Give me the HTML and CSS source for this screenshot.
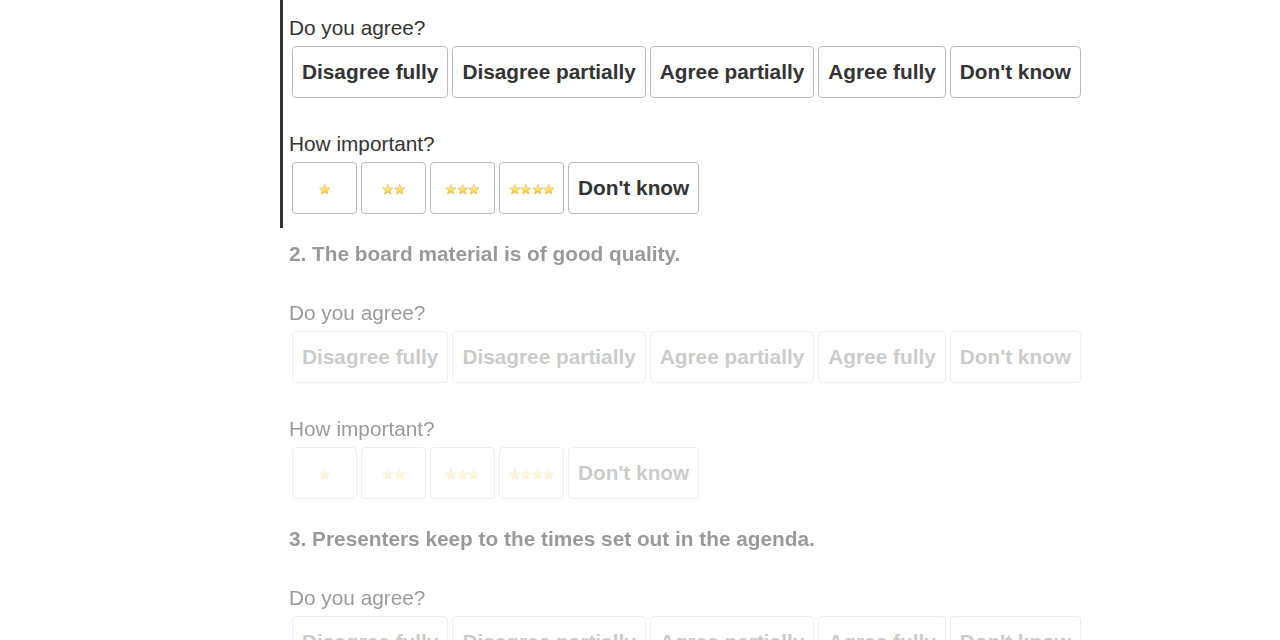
FILE: index.html
```html
<!DOCTYPE html>
<html lang="en">
<head>
  <meta charset="UTF-8" />
  <title>Board evaluation</title>
  <link rel="stylesheet" href="styles.css">
</head>
<body>
  <svg class="defs" width="0" height="0">
    <defs>
      <linearGradient id="starFill" x1="0" y1="0" x2="0" y2="1">
        <stop offset="0" stop-color="#fff8c8"/>
        <stop offset="0.55" stop-color="#ffe066"/>
        <stop offset="1" stop-color="#f2bc2a"/>
      </linearGradient>
      <symbol id="star" viewBox="0 0 12 12">
        <path d="M6 0.4 L7.41 4.06 L11.4 4.25 L8.28 6.74 L9.35 10.6 L6 8.4 L2.65 10.6 L3.72 6.74 L0.6 4.25 L4.59 4.06 Z" fill="url(#starFill)" stroke="#dcae3a" stroke-width="0.6" stroke-linejoin="round"/>
      </symbol>
    </defs>
  </svg>

  <div class="survey">
    <div class="question active">
      <div class="field">
        <div class="label">Do you agree?</div>
        <div class="options">
          <button class="opt">Disagree fully</button>
          <button class="opt">Disagree partially</button>
          <button class="opt">Agree partially</button>
          <button class="opt">Agree fully</button>
          <button class="opt">Don't know</button>
        </div>
      </div>
      <div class="field">
        <div class="label">How important?</div>
        <div class="options">
          <button class="opt stars"><svg class="star"><use href="#star"/></svg></button>
          <button class="opt stars"><svg class="star"><use href="#star"/></svg><svg class="star"><use href="#star"/></svg></button>
          <button class="opt stars"><svg class="star"><use href="#star"/></svg><svg class="star"><use href="#star"/></svg><svg class="star"><use href="#star"/></svg></button>
          <button class="opt stars"><svg class="star"><use href="#star"/></svg><svg class="star"><use href="#star"/></svg><svg class="star"><use href="#star"/></svg><svg class="star"><use href="#star"/></svg></button>
          <button class="opt">Don't know</button>
        </div>
      </div>
    </div>

    <div class="question inactive">
      <h3 class="title">2. The board material is of good quality.</h3>
      <div class="field">
        <div class="label">Do you agree?</div>
        <div class="options">
          <button class="opt">Disagree fully</button>
          <button class="opt">Disagree partially</button>
          <button class="opt">Agree partially</button>
          <button class="opt">Agree fully</button>
          <button class="opt">Don't know</button>
        </div>
      </div>
      <div class="field">
        <div class="label">How important?</div>
        <div class="options">
          <button class="opt stars"><svg class="star"><use href="#star"/></svg></button>
          <button class="opt stars"><svg class="star"><use href="#star"/></svg><svg class="star"><use href="#star"/></svg></button>
          <button class="opt stars"><svg class="star"><use href="#star"/></svg><svg class="star"><use href="#star"/></svg><svg class="star"><use href="#star"/></svg></button>
          <button class="opt stars"><svg class="star"><use href="#star"/></svg><svg class="star"><use href="#star"/></svg><svg class="star"><use href="#star"/></svg><svg class="star"><use href="#star"/></svg></button>
          <button class="opt">Don't know</button>
        </div>
      </div>
    </div>

    <div class="question inactive">
      <h3 class="title">3. Presenters keep to the times set out in the agenda.</h3>
      <div class="field">
        <div class="label">Do you agree?</div>
        <div class="options">
          <button class="opt">Disagree fully</button>
          <button class="opt">Disagree partially</button>
          <button class="opt">Agree partially</button>
          <button class="opt">Agree fully</button>
          <button class="opt">Don't know</button>
        </div>
      </div>
    </div>
  </div>
</body>
</html>
```

FILE: styles.css
```css
body {
  margin: 0;
  padding: 0;
  background: #fff;
  font-family: "Liberation Sans", Arial, sans-serif;
  color: #333;
  overflow: hidden;
}
.defs {
  position: absolute;
  width: 0;
  height: 0;
}
.survey {
  width: 820px;
  margin-left: 280px;
}
.question {
  border-left: 3px solid transparent;
  padding: 0 0 14px 6px;
  margin-bottom: 14px;
}
.question.active {
  border-left-color: #333;
  padding-top: 16px;
}
.question.active .field:first-child {
  margin-top: 0;
}
.question.inactive {
  opacity: 0.5;
}
.question.inactive .opt {
  opacity: 0.5;
}
.title {
  margin: 0;
  padding-bottom: 2px;
  font-size: 20.8px;
  line-height: 23px;
  font-weight: bold;
}
.field {
  margin-top: 34px;
}
.label {
  font-size: 20.8px;
  line-height: 23px;
  margin-bottom: 7px;
}
.options {
  display: flex;
  gap: 4px;
  margin-left: 3px;
}
.opt {
  font-family: "Liberation Sans", Arial, sans-serif;
  font-size: 20.8px;
  line-height: 23px;
  font-weight: bold;
  color: #333;
  background: #fff;
  border: 1px solid #bbb;
  border-radius: 4px;
  padding: 13px 9px 14px;
  cursor: pointer;
}
.opt.stars {
  min-width: 65px;
  padding-left: 6px;
  padding-right: 6px;
  display: flex;
  align-items: center;
  justify-content: center;
}
.star {
  width: 11.5px;
  height: 11.5px;
  margin-top: 4px;
}
```
